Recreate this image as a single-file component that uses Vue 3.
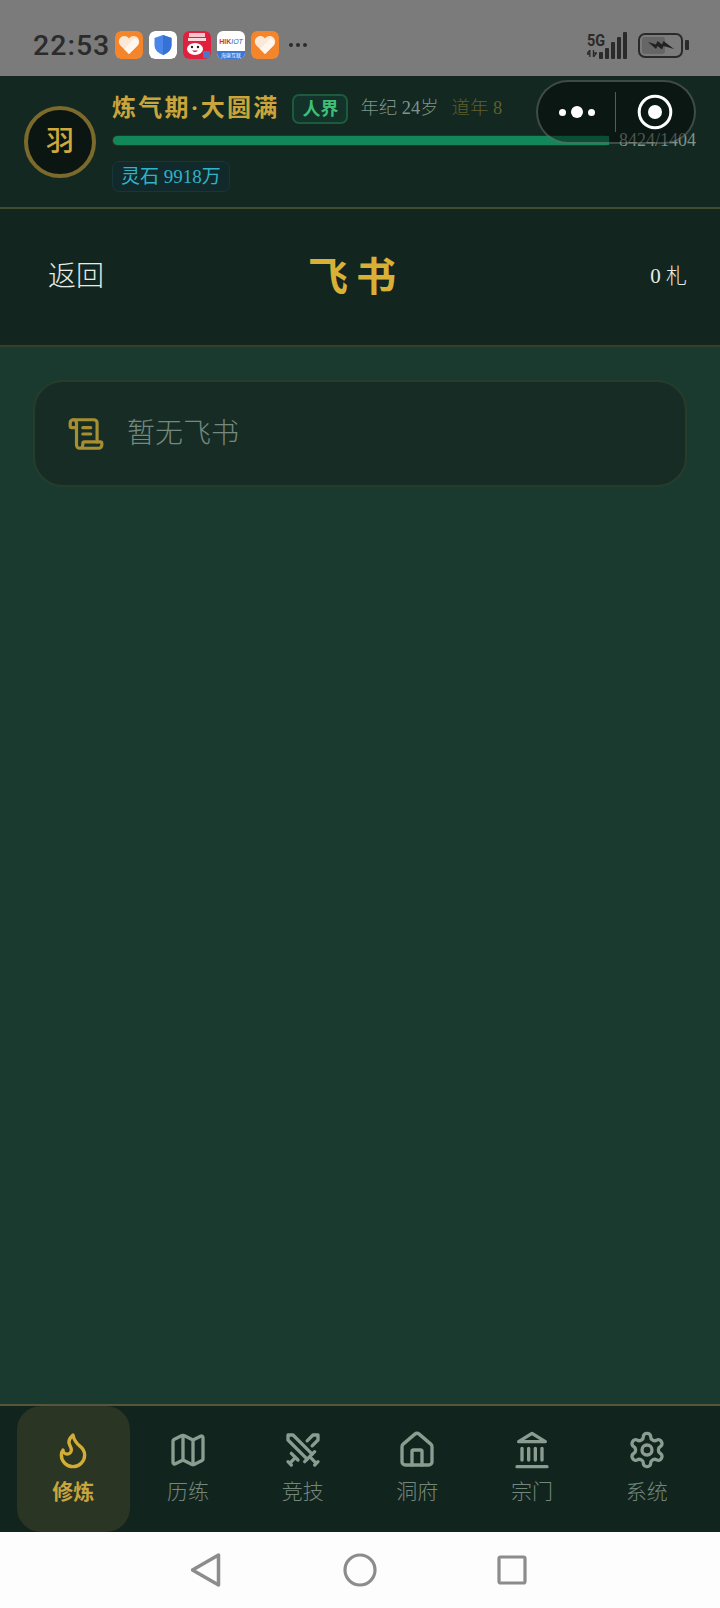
<script setup>
const tabs = [
  { label: '修炼', icon: 'flame', active: true },
  { label: '历练', icon: 'map' },
  { label: '竞技', icon: 'swords' },
  { label: '洞府', icon: 'house' },
  { label: '宗门', icon: 'landmark' },
  { label: '系统', icon: 'gear' }
]
const bars = [7, 11, 17, 22, 27]
</script>

<template>
  <div class="phone">
    <div class="statusbar">
      <span class="time">22:53</span>
      <div class="apps">
        <svg class="app" viewBox="0 0 28 28">
          <rect width="28" height="28" rx="6" fill="#f5852b" />
          <path d="M14 23 5 14c-3-4 0-9 4.500-9 2 0 3.500 1 4.500 2.500C15 6 16.500 5 18.500 5 23 5 26 10 23 14z" fill="#fde7d6" />
          <path d="M14 23 9 18l10-10c3-1 5 3 4 6z" fill="#fff6ee" />
        </svg>
        <svg class="app" viewBox="0 0 28 28">
          <rect width="28" height="28" rx="6" fill="#fff" />
          <path d="M14 4 22.500 7v7c0 5-3.500 8-8.500 10-5-2-8.500-5-8.500-10V7z" fill="#4a86e8" />
          <path d="M14 4 22.500 7v7c0 5-3.500 8-8.500 10z" fill="#3672d6" />
        </svg>
        <svg class="app" viewBox="0 0 28 28">
          <rect width="28" height="28" rx="6" fill="#e0203c" />
          <rect x="6" y="2" width="16" height="4" fill="#f8c4cc" />
          <rect x="5" y="7" width="18" height="3" fill="#fbd9de" />
          <ellipse cx="12" cy="18" rx="8" ry="6" fill="#fff" />
          <circle cx="9" cy="16" r="1.200" fill="#222" />
          <circle cx="15" cy="16" r="1.200" fill="#222" />
          <path d="M9 19.500q3 3 6 0z" fill="#e0203c" />
          <rect x="20" y="20" width="7" height="7" rx="1" fill="#4a78c8" />
        </svg>
        <div class="app hik">
          <span class="hik-name"><b>HIK</b><i>IOT</i></span>
          <span class="hik-foot">海康互联</span>
        </div>
        <svg class="app" viewBox="0 0 28 28">
          <rect width="28" height="28" rx="6" fill="#f5852b" />
          <path d="M14 23 5 14c-3-4 0-9 4.500-9 2 0 3.500 1 4.500 2.500C15 6 16.500 5 18.500 5 23 5 26 10 23 14z" fill="#fde7d6" />
          <path d="M14 23 9 18l10-10c3-1 5 3 4 6z" fill="#fff6ee" />
        </svg>
        <span class="more"><i></i><i></i><i></i></span>
      </div>
      <div class="status-right">
        <div class="net">
          <span class="fiveg">5G</span>
          <svg class="updown" viewBox="0 0 14 8" preserveAspectRatio="none"><path d="M4 0v8M4 0 0 4.500h4M9 0v8M9 8l4-4.500H9" stroke="#2a2a2a" stroke-width="1.800" fill="none" /></svg>
        </div>
        <div class="bars">
          <i v-for="h in bars" :key="h" :style="{ height: h + 'px' }"></i>
        </div>
        <div class="battery">
          <div class="cell">
            <div class="charge"></div>
            <svg class="bolt" viewBox="0 0 26 11"><path d="M0 2 8 4.500 9.500 1 14 4.500 15.500 1 26 9 15.500 6 14 9.500 9.500 6 8 9z" fill="#222" /></svg>
          </div>
          <i class="cap"></i>
        </div>
      </div>
    </div>

    <header class="header">
      <div class="avatar">羽</div>
      <div class="info">
        <div class="line">
          <span class="realm">炼气期·大圆满</span>
          <span class="badge">人界</span>
          <span class="age">年纪 24岁</span>
          <span class="dao">道年 8</span>
        </div>
        <div class="progress">
          <div class="track"><div class="fill"></div></div>
          <span class="exp">8424/1404</span>
        </div>
        <span class="stone">灵石 9918万</span>
      </div>
    </header>

    <div class="capsule">
      <div class="cap-side"><i></i><i class="big"></i><i></i></div>
      <span class="cap-line"></span>
      <div class="cap-side">
        <svg width="36" height="36" viewBox="0 0 36 36">
          <circle cx="18" cy="18" r="15.800" fill="none" stroke="#fff" stroke-width="3" />
          <circle cx="18" cy="18" r="7" fill="#fff" />
        </svg>
      </div>
    </div>

    <div class="subhead">
      <span class="back">返回</span>
      <h1 class="title">飞书</h1>
      <span class="count">0 札</span>
    </div>

    <main class="content">
      <div class="empty">
        <svg class="scroll" viewBox="0 0 24 24" fill="none" stroke="#a68f33" stroke-width="2" stroke-linecap="round" stroke-linejoin="round">
          <path d="M15 12h-5" />
          <path d="M15 8h-5" />
          <path d="M19 17V5a2 2 0 0 0-2-2H4" />
          <path d="M8 21h12a2 2 0 0 0 2-2v-1a1 1 0 0 0-1-1H11a1 1 0 0 0-1 1v1a2 2 0 1 1-4 0V5a2 2 0 1 0-4 0v2a1 1 0 0 0 1 1h3" />
        </svg>
        <span>暂无飞书</span>
      </div>
    </main>

    <nav class="tabbar">
      <div v-for="tab in tabs" :key="tab.label" class="tab" :class="{ active: tab.active }">
        <svg class="tab-icon" viewBox="0 0 24 24" fill="none" stroke="currentColor" stroke-width="2" stroke-linecap="round" stroke-linejoin="round">
          <path v-if="tab.icon === 'flame'" d="M8.500 14.500A2.500 2.500 0 0 0 11 12c0-1.380-.5-2-1-3-1.072-2.143-.224-4.054 2-6 .5 2.500 2 4.900 4 6.500 2 1.600 3 3.500 3 5.500a7 7 0 1 1-14 0c0-1.153.433-2.294 1-3a2.500 2.500 0 0 0 2.500 2.500z" />
          <template v-if="tab.icon === 'map'">
            <path d="M14.106 5.553a2 2 0 0 0 1.788 0l3.659-1.830A1 1 0 0 1 21 4.619v12.764a1 1 0 0 1-.553.894l-4.553 2.277a2 2 0 0 1-1.788 0l-4.212-2.106a2 2 0 0 0-1.788 0l-3.659 1.830A1 1 0 0 1 3 19.381V6.618a1 1 0 0 1 .553-.894l4.553-2.277a2 2 0 0 1 1.788 0z" />
            <path d="M15 5.764v15" />
            <path d="M9 3.236v15" />
          </template>
          <template v-if="tab.icon === 'swords'">
            <path d="M14.500 17.500 3 6V3h3l11.500 11.500" />
            <path d="M13 19l6-6M16 16l4 4M19 21l2-2" />
            <path d="M14.500 6.500 18 3h3v3l-3.500 3.500" />
            <path d="M5 14l4 4M7 17l-3 3M3 19l2 2" />
          </template>
          <template v-if="tab.icon === 'house'">
            <path d="M15 21v-8a1 1 0 0 0-1-1h-4a1 1 0 0 0-1 1v8" />
            <path d="M3 10a2 2 0 0 1 .709-1.528l7-5.999a2 2 0 0 1 2.582 0l7 5.999A2 2 0 0 1 21 10v9a2 2 0 0 1-2 2H5a2 2 0 0 1-2-2z" />
          </template>
          <template v-if="tab.icon === 'landmark'">
            <path d="M3 22h18M6 18v-7M10 18v-7M14 18v-7M18 18v-7" />
            <path d="M12 2l8 5H4z" />
          </template>
          <template v-if="tab.icon === 'gear'">
            <path d="M12.220 2h-.44a2 2 0 0 0-2 2v.18a2 2 0 0 1-1 1.730l-.43.25a2 2 0 0 1-2 0l-.15-.08a2 2 0 0 0-2.730.73l-.22.38a2 2 0 0 0 .73 2.730l.15.1a2 2 0 0 1 1 1.720v.51a2 2 0 0 1-1 1.740l-.15.09a2 2 0 0 0-.73 2.730l.22.38a2 2 0 0 0 2.730.73l.15-.08a2 2 0 0 1 2 0l.43.25a2 2 0 0 1 1 1.730V20a2 2 0 0 0 2 2h.44a2 2 0 0 0 2-2v-.18a2 2 0 0 1 1-1.730l.43-.25a2 2 0 0 1 2 0l.15.08a2 2 0 0 0 2.730-.73l.22-.39a2 2 0 0 0-.73-2.730l-.15-.08a2 2 0 0 1-1-1.740v-.5a2 2 0 0 1 1-1.740l.15-.09a2 2 0 0 0 .73-2.730l-.22-.38a2 2 0 0 0-2.730-.73l-.15.08a2 2 0 0 1-2 0l-.43-.25a2 2 0 0 1-1-1.730V4a2 2 0 0 0-2-2z" />
            <circle cx="12" cy="12" r="3" />
          </template>
        </svg>
        <span class="tab-label">{{ tab.label }}</span>
      </div>
    </nav>

    <div class="sysnav">
      <svg width="32" height="36" viewBox="0 0 32 36"><path d="M27.500 3v30L1.500 18z" fill="none" stroke="#8c8c8c" stroke-width="3.500" stroke-linejoin="round" /></svg>
      <svg width="34" height="34" viewBox="0 0 34 34"><circle cx="17" cy="17" r="15" fill="none" stroke="#8c8c8c" stroke-width="3.200" /></svg>
      <svg width="30" height="30" viewBox="0 0 30 30"><rect x="2" y="2" width="26" height="26" rx="1.500" fill="none" stroke="#8c8c8c" stroke-width="3.200" /></svg>
    </div>
  </div>
</template>

<style scoped>
.phone {
  position: relative;
  width: 720px;
  height: 1608px;
  display: flex;
  flex-direction: column;
  overflow: hidden;
  background: #1b3a2f;
  font-family: "Liberation Serif", "Noto Sans CJK SC", serif;
}

.statusbar {
  height: 76px;
  flex: none;
  display: flex;
  align-items: center;
  padding: 14px 31px 0 33px;
  box-sizing: border-box;
  background: #7b7b7b;
}
.time {
  width: 82px;
  font-family: Roboto, sans-serif;
  font-size: 28.500px;
  font-weight: 500;
  letter-spacing: 1px;
  color: #2b2b2b;
}
.apps {
  display: flex;
  align-items: center;
  gap: 6px;
}
.app {
  width: 28px;
  height: 28px;
  border-radius: 6px;
}
.hik {
  display: flex;
  flex-direction: column;
  overflow: hidden;
  background: #fff;
  font-family: "Liberation Sans", sans-serif;
}
.hik-name {
  flex: 1;
  display: flex;
  align-items: center;
  justify-content: center;
  font-size: 7px;
  color: #2a62c0;
}
.hik-name b {
  color: #d23040;
}
.hik-foot {
  height: 8px;
  line-height: 8px;
  font-size: 5px;
  text-align: center;
  color: #fff;
  background: #3a78d8;
  font-family: "Noto Sans CJK SC", sans-serif;
}
.more {
  display: flex;
  gap: 3px;
  margin-left: 4px;
}
.more i {
  width: 4px;
  height: 4px;
  border-radius: 50%;
  background: #2b2b2b;
}
.status-right {
  margin-left: auto;
  display: flex;
  align-items: center;
}
.net {
  width: 12px;
  display: flex;
  flex-direction: column;
  gap: 3px;
  white-space: nowrap;
}
.fiveg {
  font-family: Roboto, sans-serif;
  font-size: 17px;
  line-height: 14px;
  font-weight: 700;
  transform: scaleX(.85);
  transform-origin: left;
  color: #2a2a2a;
}
.updown {
  width: 10px;
  height: 7px;
  flex: none;
}
.bars {
  height: 27px;
  display: flex;
  align-items: flex-end;
  gap: 2px;
}
.bars i {
  width: 4px;
  background: #2a2a2a;
  border-radius: 1px;
}
.battery {
  display: flex;
  align-items: center;
  gap: 2px;
  margin-left: 11px;
}
.cell {
  position: relative;
  width: 45px;
  height: 25px;
  box-sizing: border-box;
  border: 2px solid #2a2a2a;
  border-radius: 7px;
  padding: 2px;
}
.charge {
  width: 62%;
  height: 100%;
  background: #666;
  border-radius: 3px;
}
.bolt {
  position: absolute;
  left: 8px;
  top: 5px;
  width: 26px;
  height: 11px;
}
.cap {
  width: 4px;
  height: 10px;
  background: #2a2a2a;
  border-radius: 1px;
}

.header {
  height: 133px;
  flex: none;
  box-sizing: border-box;
  display: flex;
  align-items: center;
  gap: 16px;
  padding: 0 24px;
  background: #132820;
  border-bottom: 2px solid #3f4e2f;
}
.avatar {
  width: 72px;
  height: 72px;
  flex: none;
  box-sizing: border-box;
  border: 4px solid #7b6a2c;
  border-radius: 50%;
  display: flex;
  align-items: center;
  justify-content: center;
  padding-bottom: 5px;
  background: #0b1512;
  font-size: 28px;
  font-weight: 500;
  color: #cfa93c;
}
.info {
  flex: 1;
  min-width: 0;
  display: flex;
  flex-direction: column;
  align-items: flex-start;
  padding-bottom: 2px;
}
.line {
  display: flex;
  align-items: center;
  height: 32px;
  white-space: nowrap;
}
.realm {
  font-size: 24px;
  font-weight: 700;
  letter-spacing: 2.200px;
  color: #c9a53c;
}
.badge {
  margin: 6px 0 0 13px;
  height: 30px;
  line-height: 26px;
  box-sizing: border-box;
  padding: 0 8px;
  border: 2px solid #1e5a3e;
  border-radius: 7px;
  background: #12322a;
  font-size: 18px;
  font-weight: 700;
  color: #3fbf78;
}
.age {
  margin-left: 12px;
  font-size: 18.400px;
  font-weight: 300;
  color: #7f948a;
}
.dao {
  margin-left: 13px;
  font-size: 18.400px;
  font-weight: 300;
  color: #5f5f2c;
}
.progress {
  width: 100%;
  display: flex;
  align-items: center;
  gap: 9px;
  margin-top: 8px;
}
.track {
  flex: 1;
  height: 11px;
  box-sizing: border-box;
  padding: 1px;
  border-radius: 6px;
  background: #2a3320;
}
.fill {
  width: 100%;
  height: 100%;
  border-radius: 5px 0 0 5px;
  background: #12875a;
}
.exp {
  flex: none;
  font-size: 18px;
  white-space: nowrap;
  color: #7f948a;
}
.stone {
  margin-top: 10px;
  height: 31px;
  line-height: 29px;
  box-sizing: border-box;
  padding: 0 8px;
  border: 1px solid #17363a;
  border-radius: 7px;
  background: #12292b;
  font-size: 19px;
  color: #2fb3c6;
}

.capsule {
  position: absolute;
  left: 536px;
  top: 80px;
  width: 160px;
  height: 64px;
  box-sizing: border-box;
  display: flex;
  align-items: center;
  border: 2px solid rgba(255, 255, 255, .22);
  border-radius: 32px;
  background: rgba(0, 0, 0, .42);
}
.cap-side {
  flex: 1;
  display: flex;
  align-items: center;
  justify-content: center;
  gap: 5px;
}
.cap-side i {
  width: 7px;
  height: 7px;
  border-radius: 50%;
  background: #fff;
}
.cap-side i.big {
  width: 12px;
  height: 12px;
}
.cap-line {
  width: 1px;
  height: 40px;
  margin-left: -2px;
  background: rgba(255, 255, 255, .3);
}

.subhead {
  height: 138px;
  flex: none;
  box-sizing: border-box;
  display: flex;
  align-items: center;
  justify-content: space-between;
  padding: 0 33px 6px 48px;
  background: #12261f;
  border-bottom: 2px solid #33402a;
}
.back {
  width: 200px;
  font-size: 28px;
  font-weight: 300;
  color: #e8ece8;
}
.title {
  margin: 0;
  font-size: 40px;
  font-weight: 700;
  letter-spacing: 8px;
  color: #d9b036;
}
.count {
  width: 223px;
  text-align: right;
  font-size: 21px;
  font-weight: 300;
  color: #e8ece8;
}

.content {
  flex: 1;
  padding: 33px 33px 0;
}
.empty {
  height: 107px;
  box-sizing: border-box;
  display: flex;
  align-items: center;
  gap: 22px;
  padding: 0 32px 6px;
  border: 2px solid #263d2c;
  border-radius: 30px;
  background: #172c25;
  font-size: 28px;
  font-weight: 300;
  color: #75897f;
}
.scroll {
  width: 38px;
  height: 38px;
  flex: none;
  margin-top: 6px;
}

.tabbar {
  height: 128px;
  flex: none;
  box-sizing: border-box;
  display: grid;
  grid-template-columns: repeat(6, 1fr);
  gap: 2px;
  padding: 0 17px;
  background: #12241e;
  border-top: 2px solid #56563a;
}
.tab {
  display: flex;
  flex-direction: column;
  align-items: center;
  padding-top: 24px;
  border-radius: 24px;
  color: #8b9c91;
}
.tab.active {
  background: #2a3524;
  color: #d4ad36;
}
.tab-icon {
  width: 40px;
  height: 40px;
  flex: none;
}
.tab-label {
  margin-top: 5px;
  font-size: 21px;
  font-weight: 300;
  color: #74877c;
}
.tab.active .tab-label {
  font-weight: 700;
  color: #c9a53c;
}

.sysnav {
  height: 76px;
  flex: none;
  box-sizing: border-box;
  display: flex;
  align-items: center;
  justify-content: center;
  gap: 120px;
  padding-right: 2px;
  background: #fdfdfd;
}
</style>
